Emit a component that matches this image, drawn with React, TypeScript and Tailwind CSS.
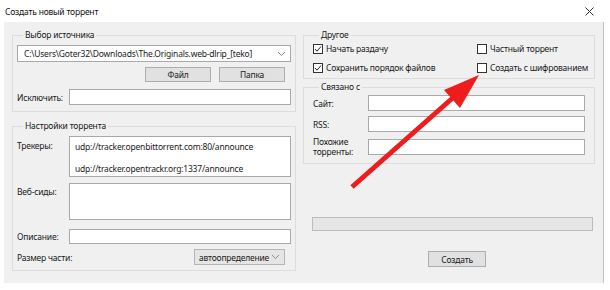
import type { ReactNode } from "react";

const BOX = "border border-[#a9a9a9] bg-white";
const BTN =
  "flex items-center justify-center border border-[#adadad] bg-[#e1e1e1] text-[#1a1a1a]";
const LABEL = "w-[52px] shrink-0 text-[#1a1a1a]";

const GroupBox = ({
  title,
  className,
  children,
}: {
  title: string;
  className: string;
  children: ReactNode;
}) => (
  <fieldset className={"border border-[#dcdcdc] " + className}>
    <legend className="ml-[6px] px-[2px] leading-[12px] text-[#1a1a1a]">
      {title}
    </legend>
    {children}
  </fieldset>
);

const Chevron = () => (
  <svg width="9" height="6" viewBox="0 0 9 6" className="shrink-0">
    <polyline
      points="1,1 4.5,4.5 8,1"
      fill="none"
      stroke="#8a8a8a"
      strokeWidth="1"
    />
  </svg>
);

const Check = ({ checked, label }: { checked?: boolean; label: string }) => (
  <div className="flex h-[13px] items-center gap-[3px]">
    <div className="flex h-[10px] w-[10px] items-center justify-center border border-[#333] bg-white">
      {checked && (
        <svg width="8" height="8" viewBox="0 0 8 8">
          <polyline
            points="1,4 3,6.2 7,1.5"
            fill="none"
            stroke="#222"
            strokeWidth="1"
          />
        </svg>
      )}
    </div>
    <span className="text-[#1a1a1a]">{label}</span>
  </div>
);

const App = () => {
  return (
    <div className="relative h-[290px] w-[610px] overflow-hidden whitespace-nowrap bg-white font-['Noto_Sans',sans-serif] text-[8.5px] leading-[11px] tracking-[-0.2px]">
      <div className="flex h-[22px] items-center justify-between pl-[5px] pr-[16px]">
        <span className="text-[#111]">Создать новый торрент</span>
        <svg width="9" height="9" viewBox="0 0 9 9">
          <path d="M0.5 0.5 L8.5 8.5 M8.5 0.5 L0.5 8.5" stroke="#333" strokeWidth="1" />
        </svg>
      </div>

      <div className="ml-[4px] flex h-[261px] w-[600px] gap-[7px] border-r border-[#c4c4c4] bg-[#f0f0f0] pl-[8px] pt-[7px]">
        {/* left column */}
        <div className="flex w-[284px] flex-col">
          <GroupBox title="Выбор источника" className="px-[4px] pb-[6px]">
            <div className={BOX + " mt-[4px] flex h-[17px] items-center justify-between pl-[6px] pr-[4px]"}>
              <span className="text-[#1a1a1a]">
                C:\Users\Goter32\Downloads\The.Originals.web-dlrip_[teko]
              </span>
              <Chevron />
            </div>
            <div className="mt-[5px] flex justify-end gap-[8px] pr-[6px]">
              <div className={BTN + " h-[15px] w-[66px]"}>Файл</div>
              <div className={BTN + " h-[15px] w-[66px]"}>Папка</div>
            </div>
            <div className="mt-[7px] flex items-center">
              <span className={LABEL}>Исключить:</span>
              <div className={BOX + " h-[16px] flex-1"} />
            </div>
          </GroupBox>

          <GroupBox title="Настройки торрента" className="mt-[8px] px-[4px] pb-[5px]">
            <div className="mt-[4px] flex">
              <span className={LABEL + " pt-[4px]"}>Трекеры:</span>
              <div className={BOX + " flex h-[41px] flex-1 flex-col gap-[11px] pl-[5px] pt-[4px] text-[#1a1a1a]"}>
                <span>udp://tracker.openbittorrent.com:80/announce</span>
                <span>udp://tracker.opentrackr.org:1337/announce</span>
              </div>
            </div>
            <div className="mt-[6px] flex">
              <span className={LABEL + " pt-[3px]"}>Веб-сиды:</span>
              <div className={BOX + " h-[37px] flex-1"} />
            </div>
            <div className="mt-[9px] flex items-center">
              <span className={LABEL}>Описание:</span>
              <div className={BOX + " h-[15px] flex-1"} />
            </div>
            <div className="mt-[5px] flex items-center justify-between pr-[6px]">
              <span className="text-[#1a1a1a]">Размер части:</span>
              <div className="flex h-[16px] w-[91px] items-center justify-between border border-[#b5b5b5] bg-[#e5e5e5] pl-[4px] pr-[4px] text-[#1a1a1a]">
                <span>автоопределение</span>
                <Chevron />
              </div>
            </div>
          </GroupBox>
        </div>

        {/* right column */}
        <div className="flex w-[292px] flex-col">
          <GroupBox title="Другое" className="pb-[4px] pl-[9px]">
            <div className="mt-[1px] flex">
              <div className="w-[164px]">
                <Check checked label="Начать раздачу" />
              </div>
              <Check label="Частный торрент" />
            </div>
            <div className="mt-[6px] flex">
              <div className="w-[164px]">
                <Check checked label="Сохранить порядок файлов" />
              </div>
              <Check label="Создать с шифрованием" />
            </div>
          </GroupBox>

          <GroupBox title="Связано с" className="mt-[2px] pb-[6px] pl-[9px] pr-[9px]">
            <div className="mt-[2px] flex items-center">
              <span className={LABEL + " w-[55px]"}>Сайт:</span>
              <div className={BOX + " h-[16px] flex-1"} />
            </div>
            <div className="mt-[5px] flex items-center">
              <span className={LABEL + " w-[55px]"}>RSS:</span>
              <div className={BOX + " h-[16px] flex-1"} />
            </div>
            <div className="mt-[5px] flex items-center">
              <span className={LABEL + " w-[55px] leading-[10px]"}>
                Похожие
                <br />
                торренты:
              </span>
              <div className={BOX + " h-[16px] flex-1"} />
            </div>
          </GroupBox>

          <div className="ml-[9px] mt-[53px] h-[14px] w-[281px] border border-[#bcbcbc] bg-[#e6e6e6]" />
          <div className={BTN + " ml-[125px] mt-[20px] h-[16px] w-[58px]"}>Создать</div>
        </div>
      </div>

      <svg
        className="pointer-events-none absolute left-0 top-0"
        width="610"
        height="290"
        viewBox="0 0 610 290"
      >
        <line x1="352" y1="187" x2="456" y2="95" stroke="#ee1c1c" strokeWidth="5" />
        <polygon points="479,75 444,90 460,108" fill="#ee1c1c" />
      </svg>
    </div>
  );
};

export default App;
